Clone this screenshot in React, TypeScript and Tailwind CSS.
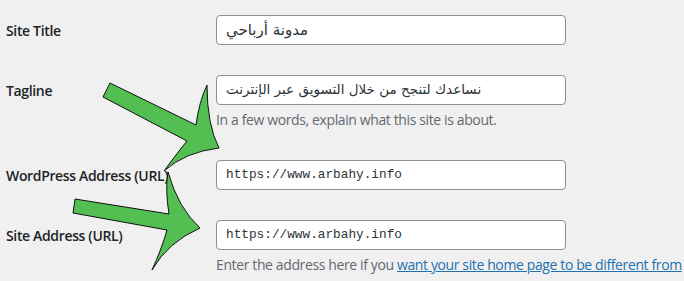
import React from "react";

const labelCls =
  "w-[210px] shrink-0 text-[14px] font-semibold text-[#1d2327] font-['Open_Sans','Noto_Sans',sans-serif] tracking-[-0.35px]";
const boxCls =
  "w-[350px] h-[30px] shrink-0 bg-white border border-[#8c8f94] rounded-[4px] flex items-center px-[9px]";

export default function App() {
  return (
    <div className="relative w-[684px] h-[281px] overflow-hidden bg-[#f0f0f1]">
      <div className="flex flex-col pl-[6px] pt-[15px]">
        <div className="flex items-center">
          <div className={labelCls}>Site Title</div>
          <div className={boxCls}>
            <span dir="rtl" className="text-[15px] text-[#2c3338] font-['DejaVu_Sans',sans-serif] leading-none">
              مدونة أرباحي
            </span>
          </div>
        </div>

        <div className="flex items-center mt-[30px]">
          <div className={labelCls}>Tagline</div>
          <div className={boxCls}>
            <span dir="rtl" className="text-[13.5px] text-[#2c3338] font-['DejaVu_Sans',sans-serif] leading-none tracking-[-0.35px]">
              نساعدك لتنجح من خلال التسويق عبر الإنترنت
            </span>
          </div>
        </div>
        <div className="pl-[210px] mt-[5px] text-[14px] leading-[20px] text-[#646970] font-['Open_Sans','Noto_Sans',sans-serif] tracking-[-0.38px]">
          In a few words, explain what this site is about.
        </div>

        <div className="flex items-center mt-[30px]">
          <div className={labelCls}>WordPress Address (URL)</div>
          <div className={boxCls}>
            <span className="text-[12.75px] text-[#2c3338] font-['Liberation_Mono',monospace] leading-none">
              https://www.arbahy.info
            </span>
          </div>
        </div>

        <div className="flex items-center mt-[30px]">
          <div className={labelCls}>Site Address (URL)</div>
          <div className={boxCls}>
            <span className="text-[12.75px] text-[#2c3338] font-['Liberation_Mono',monospace] leading-none">
              https://www.arbahy.info
            </span>
          </div>
        </div>
        <div className="pl-[210px] mt-[5px] text-[14px] leading-[20px] text-[#646970] font-['Open_Sans','Noto_Sans',sans-serif] tracking-[-0.38px] whitespace-nowrap">
          Enter the address here if you{" "}
          <span className="text-[#2271b1] underline">
            want your site home page to be different from
          </span>
        </div>
      </div>

      <svg
        className="absolute left-0 top-0 pointer-events-none"
        width="684"
        height="281"
        viewBox="0 0 684 281"
      >
        <path
          d="M110,83 L196,125 Q199,102 207,85 Q207,125 219,148 Q185,152 164,171 Q178,152 187,141 L103,97 Z"
          fill="#53bf53"
          stroke="#111"
          strokeWidth="1"
          strokeLinejoin="miter"
        />
        <path
          d="M75,199 L169,214 Q165,190 168,172 Q178,208 200,228 Q168,242 152,270 Q162,248 167,230 L73,213 Z"
          fill="#53bf53"
          stroke="#111"
          strokeWidth="1"
          strokeLinejoin="miter"
        />
      </svg>
    </div>
  );
}
